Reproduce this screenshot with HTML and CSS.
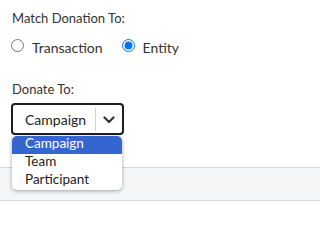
FILE: index.html
```html
<!DOCTYPE html>
<html>
<head>
<meta charset="utf-8">
<link rel="stylesheet" href="styles.css">
</head>
<body>
<div class="panel">
  <div class="field-label">Match Donation To:</div>
  <div class="radio-row">
    <label class="radio-opt"><input type="radio" name="match" class="radio"><span>Transaction</span></label>
    <label class="radio-opt"><input type="radio" name="match" class="radio" checked><span>Entity</span></label>
  </div>
  <div class="field-label donate-label">Donate To:</div>
  <div class="select-wrap">
    <div class="select">
      <span class="select-value">Campaign</span>
      <span class="select-divider"></span>
      <span class="select-arrow">
        <svg width="12" height="8" viewBox="0 0 12 8"><path d="M1.5 1.5 L6 6 L10.5 1.5" fill="none" stroke="#2b3544" stroke-width="2.2" stroke-linecap="round" stroke-linejoin="round"/></svg>
      </span>
    </div>
    <ul class="menu">
      <li class="menu-item active">Campaign</li>
      <li class="menu-item">Team</li>
      <li class="menu-item">Participant</li>
    </ul>
  </div>
</div>
<div class="footer"></div>
</body>
</html>
```
FILE: styles.css
```css
html, body {
  margin: 0;
  padding: 0;
  background: #ffffff;
}
body {
  font-family: Lato, "Liberation Sans", sans-serif;
  font-size: 13px;
  color: #333333;
  overflow: hidden;
}
.panel {
  padding: 10px 0 0 12px;
  height: 157px;
}
.field-label {
  line-height: 16px;
  height: 16px;
}
.radio-row {
  display: flex;
  margin-top: 14px;
  line-height: 16px;
  font-size: 14px;
}
.radio-opt {
  display: flex;
  align-items: flex-start;
  margin-right: 20px;
}
.radio {
  margin: -1px 8px 0 -1px;
  width: 13px;
  height: 13px;
}
.donate-label {
  margin-top: 25px;
}
.select-wrap {
  position: relative;
  margin-top: 6px;
  margin-left: -1px;
  width: 113px;
}
.select {
  box-sizing: border-box;
  height: 32px;
  border: 2px solid #1f1f1f;
  border-radius: 4px;
  display: flex;
  align-items: center;
  font-size: 14px;
  color: #222;
  background: #fff;
}
.select-value {
  padding-left: 12px;
  flex: 1;
}
.select-divider {
  width: 1px;
  height: 23px;
  background: #d0d0d0;
}
.select-arrow {
  width: 26px;
  display: flex;
  justify-content: center;
  align-items: center;
  padding-top: 1px;
}
.menu {
  position: absolute;
  left: 1px;
  top: 33px;
  width: 110px;
  margin: 0;
  padding: 0;
  list-style: none;
  background: #fff;
  border-radius: 5px;
  box-shadow: 0 1px 4px rgba(0, 0, 0, 0.35);
  z-index: 2;
  font-size: 13.5px;
  color: #222;
}
.menu-item {
  height: 18px;
  line-height: 14px;
  padding: 0 0 4px 13px;
  box-sizing: border-box;
}
.menu-item.active {
  background: #3566d0;
  color: #fff;
  border-radius: 5px 5px 0 0;
}
.footer {
  height: 32px;
  border-top: 1px solid #d4d6d9;
  border-bottom: 1px solid #d4d6d9;
  background: #f5f6f8;
}
```
